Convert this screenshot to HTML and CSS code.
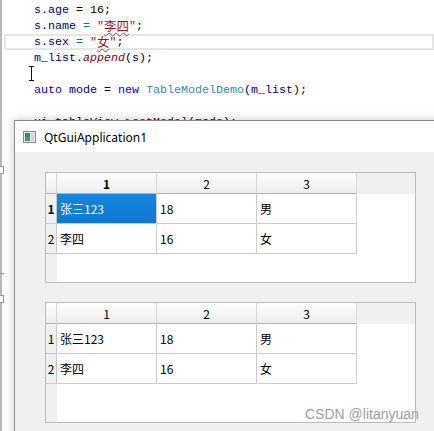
FILE: index.html
```html
<!DOCTYPE html>
<html>
<head>
<meta charset="utf-8">
<link rel="stylesheet" href="styles.css">
</head>
<body>
<div class="editor">
  <div class="line"><span class="id">s.age</span> = 16;</div>
  <div class="line"><span class="id">s.name</span> <span class="op">=</span> <span class="str">"<span class="cj sq">李四</span>"</span>;</div>
  <div class="line cur"><span class="id">s.sex</span> <span class="op">=</span> <span class="str">"<span class="cj sq">女</span>"</span>;</div>
  <div class="line"><span class="id">m_list</span>.<span class="fn">append</span>(<span class="id">s</span>);</div>
  <div class="line"></div>
  <div class="line"><span class="kw">auto</span> <span class="id">mode</span> = <span class="kw">new</span> <span class="ty">TableModelDemo</span>(<span class="id">m_list</span>);</div>
  <div class="line"></div>
  <div class="line"><span class="id">ui.tableView</span>-&gt;<span class="fn2">setModel</span>(<span class="id">mode</span>);</div>
</div>
<div class="fold f1"></div>
<div class="fold f2"></div>
<div class="tick"></div>
<svg class="ibeam" width="6" height="15" viewBox="0 0 6 15"><path d="M0 0.5H5M0 14.5H5M2.5 0.5V14.5" stroke="#111" stroke-width="1" fill="none"/></svg>

<div class="window">
  <div class="titlebar">
    <svg class="appicon" width="13" height="12" viewBox="0 0 13 12">
      <rect x="0.5" y="0.5" width="12" height="11" fill="#e8e8e8" stroke="#8a8a8a"/>
      <rect x="2" y="2" width="5" height="8" fill="#3f7f8a"/>
      <rect x="2" y="6" width="5" height="4" fill="#4f9a5a"/>
      <rect x="8" y="2" width="3" height="8" fill="#c9d4dc"/>
    </svg>
    <span class="title">QtGuiApplication1</span>
  </div>
  <div class="client">
    <div class="table t1">
      <div class="corner"></div>
      <div class="hh bold">1</div>
      <div class="hh">2</div>
      <div class="hh">3</div>
      <div class="hfill"></div>

      <div class="vh bold">1</div>
      <div class="cell sel">张三123</div>
      <div class="cell">18</div>
      <div class="cell">男</div>
      <div class="fill"></div>

      <div class="vh">2</div>
      <div class="cell">李四</div>
      <div class="cell">16</div>
      <div class="cell">女</div>
      <div class="fill"></div>

      <div class="vstrip"></div>
      <div class="fill span4"></div>
    </div>
    <div class="table t2">
      <div class="corner"></div>
      <div class="hh">1</div>
      <div class="hh">2</div>
      <div class="hh">3</div>
      <div class="hfill"></div>

      <div class="vh">1</div>
      <div class="cell">张三123</div>
      <div class="cell">18</div>
      <div class="cell">男</div>
      <div class="fill"></div>

      <div class="vh">2</div>
      <div class="cell">李四</div>
      <div class="cell">16</div>
      <div class="cell">女</div>
      <div class="fill"></div>

      <div class="vstrip"></div>
      <div class="fill span4"></div>
    </div>
  </div>
</div>
<div class="watermark">CSDN @litanyuan</div>
</body>
</html>
```

FILE: styles.css
```css
html, body {
  margin: 0;
  padding: 0;
  background: #ffffff;
  overflow: hidden;
  width: 434px;
  height: 431px;
}

.editor {
  border-left: 2px solid #b8b8b8;
  height: 431px;
  box-sizing: border-box;
  padding-top: 2px;
  font-family: "Liberation Mono", "Noto Sans CJK SC", monospace;
  font-size: 11.67px;
  color: #000000;
}

.line {
  height: 16px;
  line-height: 16px;
  padding-left: 32px;
  white-space: pre;
}

.line.cur {
  margin-left: 2px;
  padding-left: 30px;
  box-shadow: inset 0 0 0 2px #e6e6e6;
}

.id { color: #000080; }
.op { color: #008080; }
.str { color: #a31515; }
.kw { color: #0000ff; }
.ty { color: #2b91af; }
.fn { color: #880000; font-style: italic; }
.fn2 { color: #880000; }
.cj {
  font-family: "Noto Sans CJK SC", sans-serif;
  font-size: 12.5px;
  display: inline-block;
  line-height: 14px;
  vertical-align: top;
  margin-top: 1px;
}
.sq {
  text-decoration: underline wavy #e03030;
  text-decoration-thickness: 1px;
  text-underline-offset: 1px;
}

.fold {
  position: absolute;
  left: 0;
  width: 3px;
  height: 6px;
  border: 1px solid #9a9a9a;
  border-left: none;
  background: #fff;
}
.fold.f1 { top: 166px; }
.fold.f2 { top: 295px; }
.tick {
  position: absolute;
  left: 0;
  top: 273px;
  width: 4px;
  height: 1px;
  background: #9a9a9a;
}

.ibeam {
  position: absolute;
  left: 29px;
  top: 66px;
}

.window {
  position: absolute;
  left: 14px;
  top: 120px;
  width: 440px;
  height: 330px;
  border-top: 1px solid #868686;
  border-left: 1px solid #8e8e8e;
  box-shadow: 0 0 9px rgba(0, 0, 0, 0.22);
  background: #f0f0f0;
  font-family: "Noto Sans", "Noto Sans CJK SC", sans-serif;
}

.titlebar {
  height: 31px;
  background: #ffffff;
  display: flex;
  align-items: center;
  padding-left: 8px;
  gap: 8px;
  box-sizing: border-box;
  padding-top: 1px;
}

.appicon { flex: none; }

.title {
  font-size: 12px;
  color: #000;
  letter-spacing: 0;
}

.client {
  padding: 20px 0 0 30px;
  display: flex;
  flex-direction: column;
  gap: 19px;
}

.table {
  width: 371px;
  box-sizing: border-box;
  border: 1px solid #bcbcbc;
  background: #ffffff;
  display: grid;
  grid-template-columns: 11px 100px 100px 100px 1fr;
  grid-template-rows: 21px 30px 30px 1fr;
  font-family: "Noto Sans CJK SC", sans-serif;
  font-size: 12px;
  color: #000;
}
.t1 { height: 111px; }
.t2 { height: 121px; }

.corner, .hh {
  background: linear-gradient(#fdfdfd, #ededed);
  border-bottom: 1px solid #b4b4b4;
  border-right: 1px solid #d6d6d6;
  box-sizing: border-box;
}
.hh {
  display: flex;
  align-items: center;
  justify-content: center;
}
.hfill {
  background: #f0f0f0;
}

.vh {
  background: #f0f0f0;
  border-right: 1px solid #c8c8c8;
  border-bottom: 1px solid #c8c8c8;
  box-sizing: border-box;
  display: flex;
  align-items: center;
  justify-content: center;
}

.bold { font-weight: bold; }

.cell {
  border-right: 1px solid #cccccc;
  border-bottom: 1px solid #cccccc;
  box-sizing: border-box;
  display: flex;
  align-items: center;
  padding-left: 3px;
}
.cell.sel {
  background: linear-gradient(#1886dc, #0a78d6);
  color: #ffffff;
}

.vstrip { background: #f0f0f0; }
.span4 { grid-column: span 4; }

.watermark {
  position: absolute;
  left: 305px;
  top: 405px;
  font-family: "Liberation Sans", Arial, sans-serif;
  font-size: 14px;
  color: #9e9e9e;
  line-height: 18px;
}
```
